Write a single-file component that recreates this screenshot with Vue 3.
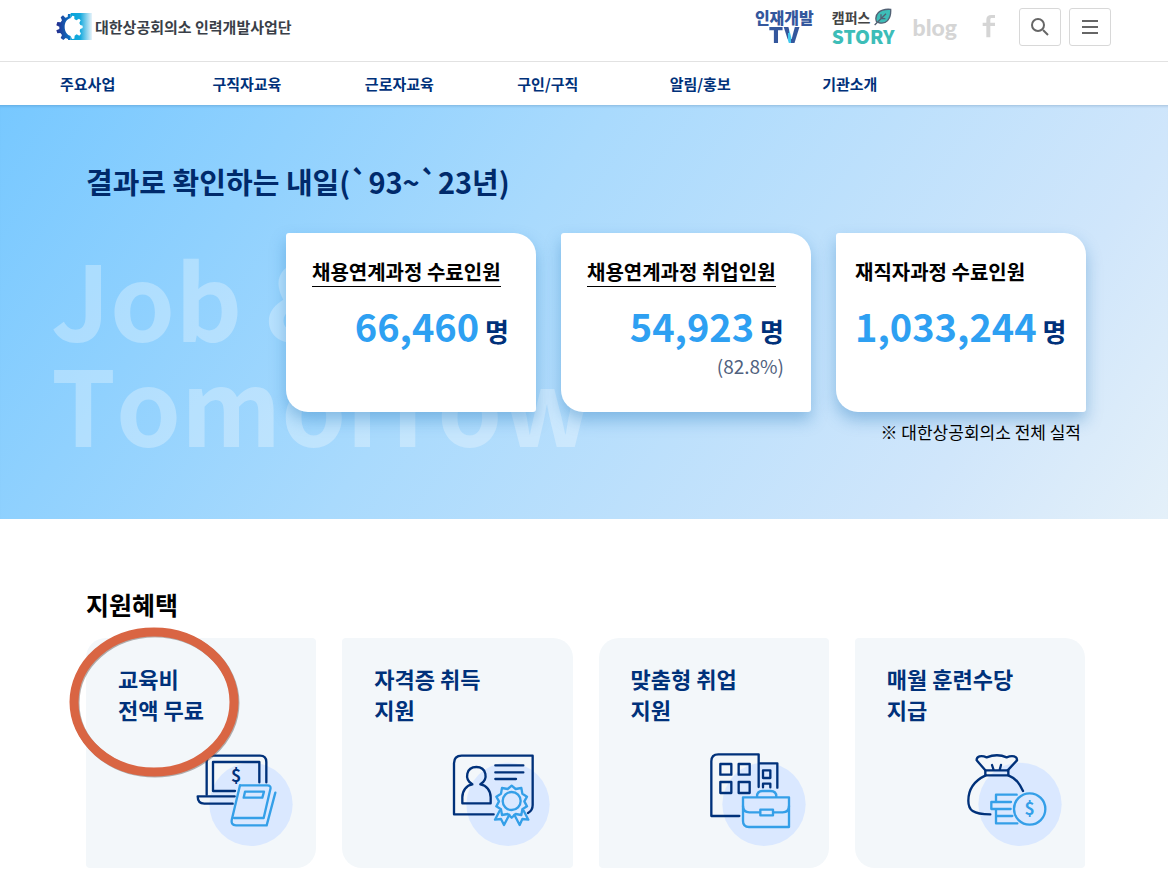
<template>
  <div class="page">
    <header class="header">
      <div class="top-bar">
        <a class="logo" href="#">
          <svg class="logo-mark" viewBox="0 0 108 81" aria-hidden="true">
            <defs>
              <linearGradient id="gear" x1="0" x2="1">
                <stop offset="0" stop-color="#252b8c" />
                <stop offset="1" stop-color="#0878c8" />
              </linearGradient>
              <linearGradient id="fade" x1="0" x2="1">
                <stop offset="0" stop-color="#07a3d8" />
                <stop offset="0.45" stop-color="#16aade" />
                <stop offset="1" stop-color="#e8f3fa" />
              </linearGradient>
            </defs>
            <path fill="url(#gear)" d="M44 3h-8l-1 9-7 2-7-7-7 6 4 9-4 6-10-1-3 10 9 4v7l-9 4 3 9 9-1 5 6-4 9 8 6 7-6 7 3 1 9h7z" />
            <path fill="url(#fade)" d="M44 0h64v81H44z" />
            <path fill="#fff" d="M44 16l5-8 6 2v8l6 4 8-5 5 5-4 8 3 6 7 2v7l-7 3-2 6 4 8-5 6-8-4-6 4-1 9-7 1-4-9C34 67 26 56 26 42s7-24 18-26z" />
          </svg>
          <span class="logo-text">대한상공회의소 인력개발사업단</span>
        </a>
        <div class="tools">
          <a class="tv" href="#"><span class="tv-top">인재개발</span><span class="tv-bottom">TV</span></a>
          <a class="story" href="#">
            <span class="story-top">캠퍼스
              <svg class="leaf" viewBox="0 0 54 54" aria-hidden="true">
                <path d="M8 43C-1 20 17 1 50 4c2 29-14 48-38 39" fill="#3dbdb8" stroke="#526174" stroke-width="4" />
                <path d="M2 51L36 17M21 32V19M21 32h13" fill="none" stroke="#526174" stroke-width="4" />
              </svg>
            </span>
            <span class="story-bottom">STORY</span>
          </a>
          <a class="blog" href="#">blog</a>
          <a class="facebook" href="#" aria-label="facebook">
            <svg viewBox="0 0 42 72" aria-hidden="true">
              <path d="M39 9H30c-4 0-5 2-5 6v8h14v10H25v34H13V33H2V23h11V14C13 5 18 0 28 0h11z" fill="#d5d5d5" />
            </svg>
          </a>
          <button class="icon-button" type="button" aria-label="검색">
            <svg viewBox="0 0 24 24"><circle cx="10" cy="10" r="6" /><path d="M15 15l5 5" /></svg>
          </button>
          <button class="icon-button" type="button" aria-label="전체메뉴">
            <svg viewBox="0 0 24 24"><path d="M4 6h16M4 12h16M4 18h16" /></svg>
          </button>
        </div>
      </div>
      <nav class="nav">
        <a v-for="item in menu" :key="item" href="#">{{ item }}</a>
      </nav>
    </header>

    <section class="hero">
      <p class="watermark" aria-hidden="true">Job &amp;<br>Tomorrow</p>
      <h1 class="hero-title">결과로 확인하는 내일(`93~`23년)</h1>
      <div class="stats">
        <article v-for="stat in stats" :key="stat.title" class="stat" :class="{ wide: !stat.link }">
          <h2 class="stat-title">
            <a v-if="stat.link" href="#">{{ stat.title }}</a>
            <template v-else>{{ stat.title }}</template>
          </h2>
          <p class="stat-value"><strong>{{ stat.value }}</strong> <span>명</span></p>
          <p v-if="stat.rate" class="stat-rate">({{ stat.rate }})</p>
        </article>
      </div>
      <p class="note">※ 대한상공회의소 전체 실적</p>
    </section>

    <section class="benefits">
      <h2 class="benefits-title">지원혜택</h2>
      <ul class="benefit-list">
        <li v-for="(benefit, i) in benefits" :key="benefit.icon" class="benefit" :class="{ flipped: i % 2 === 1 }">
          <h3>{{ benefit.lines[0] }}<br>{{ benefit.lines[1] }}</h3>

          <svg v-if="benefit.icon === 'laptop'" class="benefit-icon" viewBox="41 33 300 291">
            <circle class="disc" cx="215" cy="193" r="125" />
            <g class="navy">
              <path d="M82 164V66q0-19 19-19h141q19 0 19 19v61" />
              <path d="M167 153h-66V66h139v61" />
              <path d="M166 169H55q0 22 20 22h85" />
            </g>
            <text class="dollar navy-text" x="170" y="125">$</text>
            <g class="sky">
              <path d="M182 136h82q12 0 9 12l-20 86H164" />
              <path d="M182 136l-24 100q-5 20 12 20h92l26-98" />
              <path d="M197 155h57l-5 18h-56z" />
            </g>
          </svg>

          <svg v-else-if="benefit.icon === 'license'" class="benefit-icon" viewBox="31 33 300 291">
            <circle class="disc" cx="205" cy="193" r="125" />
            <g class="navy">
              <path d="M162 223H43V70q0-23 23-23h213v148q0 17-14 24" />
              <path d="M98 133c-26-16-18-52 12-52s38 36 12 52c19 3 31 19 31 39v18H68v-18c0-20 12-36 30-39z" />
              <path d="M167 76h84M167 97h84M167 117h62" />
            </g>
            <g class="sky">
              <path d="M216 137l12 10 17-3 3 17 14 9-8 14 8 15-14 9-3 17-17-3-12 11-12-11-17 3-3-17-14-9 8-15-8-14 14-9 3-17 17 3z" />
              <circle cx="216" cy="183" r="27" />
              <path d="M180 212l-14 27 18-2 9 18 16-31M252 212l14 27-18-2-8 18-16-31" />
            </g>
          </svg>

          <svg v-else-if="benefit.icon === 'job'" class="benefit-icon" viewBox="34 33 300 291">
            <circle class="disc" cx="208" cy="193" r="125" />
            <g class="navy">
              <path d="M134 228H50V64q0-21 21-21h121v98M192 70h56v73" />
              <path d="M77 72h33v32H77zM132 72h33v32h-33zM77 126h33v33H77zM132 126h33v33h-33zM205 91h22v23h-22zM205 142v-11h22v11" />
            </g>
            <g class="sky">
              <path d="M145 172h138v89H163q-18 0-18-18z" />
              <path d="M187 170q0-17 16-17h25q17 0 17 17" />
              <path d="M145 198q0 19 19 19h32M236 217h28q19 0 19-19" />
              <path d="M197 209h38v17h-38z" />
            </g>
          </svg>

          <svg v-else class="benefit-icon" viewBox="41 33 300 291">
            <circle class="disc" cx="215" cy="193" r="125" />
            <g class="navy">
              <path d="M111 91L85 61c-1-12 13-16 30-9 20-8 42-8 60 0 18-7 32-3 31 9l-28 30" />
              <path d="M111 91h69v15h-69zM131 75l5 15M158 75l-4 15" />
              <path d="M112 106C74 124 60 154 60 182c0 28 13 41 66 41M180 106c25 10 35 27 44 47" />
            </g>
            <g class="sky">
              <path d="M205 164h-62v22M188 186h-59v21h58M143 207v43h64M143 228h49" />
              <circle cx="244" cy="207" r="47" />
            </g>
            <text class="dollar sky-text" x="244" y="226">$</text>
          </svg>

          <svg v-if="benefit.marked" class="mark" viewBox="0 0 172 152" aria-hidden="true">
            <ellipse class="mark-shadow" cx="86" cy="76" rx="80" ry="70" />
            <ellipse cx="85" cy="75" rx="80" ry="70" />
          </svg>
        </li>
      </ul>
    </section>
  </div>
</template>

<script setup>
const menu = ['주요사업', '구직자교육', '근로자교육', '구인/구직', '알림/홍보', '기관소개'];

const stats = [
  { title: '채용연계과정 수료인원', value: '66,460', link: true },
  { title: '채용연계과정 취업인원', value: '54,923', rate: '82.8%', link: true },
  { title: '재직자과정 수료인원', value: '1,033,244', link: false },
];

const benefits = [
  { icon: 'laptop', lines: ['교육비', '전액 무료'], marked: true },
  { icon: 'license', lines: ['자격증 취득', '지원'] },
  { icon: 'job', lines: ['맞춤형 취업', '지원'] },
  { icon: 'allowance', lines: ['매월 훈련수당', '지급'] },
];
</script>

<style>
body {
  background: #fff;
}
</style>

<style scoped>
.page {
  color: #000;
  font-family: "Noto Sans CJK KR", sans-serif;
  overflow: hidden;
}

h1,
h2,
h3,
p,
ul {
  margin: 0;
  padding: 0;
}

a {
  color: inherit;
  text-decoration: none;
}

/* Header */
.top-bar {
  display: flex;
  align-items: center;
  justify-content: space-between;
  box-sizing: border-box;
  height: 62px;
  padding: 0 57px 8px 56px;
  border-bottom: 1px solid #e2e2e2;
}

.logo {
  display: flex;
  align-items: center;
  gap: 3px;
  color: #3a3f48;
}

.logo-mark {
  width: 36px;
  height: 27px;
}

.logo-text {
  font-size: 15px;
  font-weight: 700;
  line-height: 24px;
}

.tools {
  display: flex;
  align-items: center;
}

.tv,
.story {
  display: flex;
  flex-direction: column;
}

.tv {
  align-items: center;
  margin-right: 18px;
  color: #34579d;
  font-weight: 900;
}

.tv-top {
  font-size: 16px;
  line-height: 18px;
}

.tv-bottom {
  font-family: Inter, sans-serif;
  font-size: 21px;
  line-height: 20px;
  background: linear-gradient(100deg, #34579d 60%, #42c8ee 60%, #42c8ee 72%, #34579d 72%);
  background-clip: text;
  color: transparent;
}

.story {
  margin-right: 18px;
}

.story-top {
  display: flex;
  align-items: center;
  gap: 4px;
  color: #444;
  font-size: 14px;
  font-weight: 700;
  line-height: 18px;
}

.leaf {
  width: 18px;
  height: 18px;
}

.story-bottom {
  color: #3dbdb8;
  font-size: 19px;
  font-weight: 900;
  line-height: 20px;
}

.blog {
  margin-right: 25px;
  color: #d5d5d5;
  font-family: Lato, sans-serif;
  font-size: 23px;
  font-weight: 900;
  line-height: 24px;
}

.facebook {
  margin-right: 23px;
}

.facebook svg {
  display: block;
  width: 14px;
  height: 24px;
}

.icon-button {
  display: flex;
  align-items: center;
  justify-content: center;
  box-sizing: border-box;
  width: 42px;
  height: 38px;
  padding: 0;
  border: 1px solid #d8d8d8;
  border-radius: 3px;
  background: #fff;
  cursor: pointer;
}

.icon-button + .icon-button {
  margin-left: 8px;
}

.icon-button svg {
  width: 24px;
  height: 24px;
  fill: none;
  stroke: #666;
  stroke-width: 2;
}

.nav {
  display: grid;
  grid-template-columns: repeat(7, 1fr);
  padding: 0 41px 0 60px;
  color: #00317a;
  font-size: 15px;
  font-weight: 700;
  line-height: 43px;
}

/* Hero */
.hero {
  position: relative;
  padding: 52px 82px 75px 86px;
  background: linear-gradient(125deg, #77c8ff 0%, #a9dafd 42%, #d0e6fb 82%, #e4f0f9 100%);
  box-shadow: inset 0 3px 3px -2px rgba(0, 50, 100, 0.2);
}

.watermark {
  position: absolute;
  top: 139px;
  left: 51px;
  color: rgba(255, 255, 255, 0.3);
  font-size: 104px;
  font-weight: 700;
  line-height: 105px;
  font-kerning: none;
}

.hero-title {
  position: relative;
  color: #002a6b;
  font-size: 29px;
  font-weight: 700;
  line-height: 48px;
}

.stats {
  position: relative;
  display: flex;
  justify-content: flex-end;
  gap: 25px;
  margin-top: 28px;
}

.stat {
  box-sizing: border-box;
  width: 250px;
  min-height: 179px;
  padding: 24px 27px 20px 26px;
  border-radius: 3px 22px 3px 22px;
  background: #fff;
  box-shadow: 0 8px 16px rgba(20, 110, 180, 0.35);
}

.stat.wide {
  padding-right: 20px;
  padding-left: 19px;
}

.stat-title {
  font-size: 20px;
  font-weight: 700;
  line-height: 30px;
}

.stat-title a {
  display: inline-block;
  line-height: 29px;
  border-bottom: 1px solid #000;
}

.stat-value {
  margin-top: 16px;
  color: #00317a;
  font-size: 26px;
  font-weight: 700;
  line-height: 46px;
  text-align: right;
  white-space: nowrap;
}

.stat-value strong {
  color: #2ea0f2;
  font-size: 38px;
  font-weight: 700;
}

.stat-rate {
  color: #50617e;
  font-size: 19px;
  line-height: 24px;
  text-align: right;
}

.note {
  position: relative;
  margin-top: 8px;
  padding-right: 5px;
  font-size: 17px;
  line-height: 24px;
  text-align: right;
}

/* Benefits */
.benefits {
  padding: 67px 83px 13px 86px;
}

.benefits-title {
  font-size: 25px;
  font-weight: 700;
  line-height: 36px;
}

.benefit-list {
  display: grid;
  grid-template-columns: repeat(4, 1fr);
  gap: 26px;
  margin-top: 16px;
  list-style: none;
}

.benefit {
  position: relative;
  display: flex;
  flex-direction: column;
  justify-content: space-between;
  box-sizing: border-box;
  min-height: 230px;
  padding: 25px 23px 20px 32px;
  border-radius: 20px 4px 20px 4px;
  background: #f3f7fa;
}

.benefit.flipped {
  border-radius: 4px 20px 4px 20px;
}

.benefit h3 {
  color: #00317a;
  font-size: 22px;
  font-weight: 700;
  line-height: 31px;
}

.benefit-icon {
  align-self: flex-end;
  width: 100px;
  height: 97px;
}

.disc {
  fill: #dae8ff;
}

.navy,
.sky {
  fill: none;
  stroke: #00317a;
  stroke-width: 7;
  stroke-linecap: round;
  stroke-linejoin: round;
}

.sky {
  stroke: #349fe8;
}

.dollar {
  font-size: 52px;
  font-weight: 700;
  text-anchor: middle;
}

.navy-text {
  fill: #00317a;
}

.sky-text {
  fill: #349fe8;
}

.mark {
  position: absolute;
  top: -11px;
  left: -17px;
  width: 172px;
  height: 152px;
  fill: none;
  stroke: #d96543;
  stroke-width: 9;
}

.mark-shadow {
  stroke: rgba(90, 80, 75, 0.45);
}
</style>
